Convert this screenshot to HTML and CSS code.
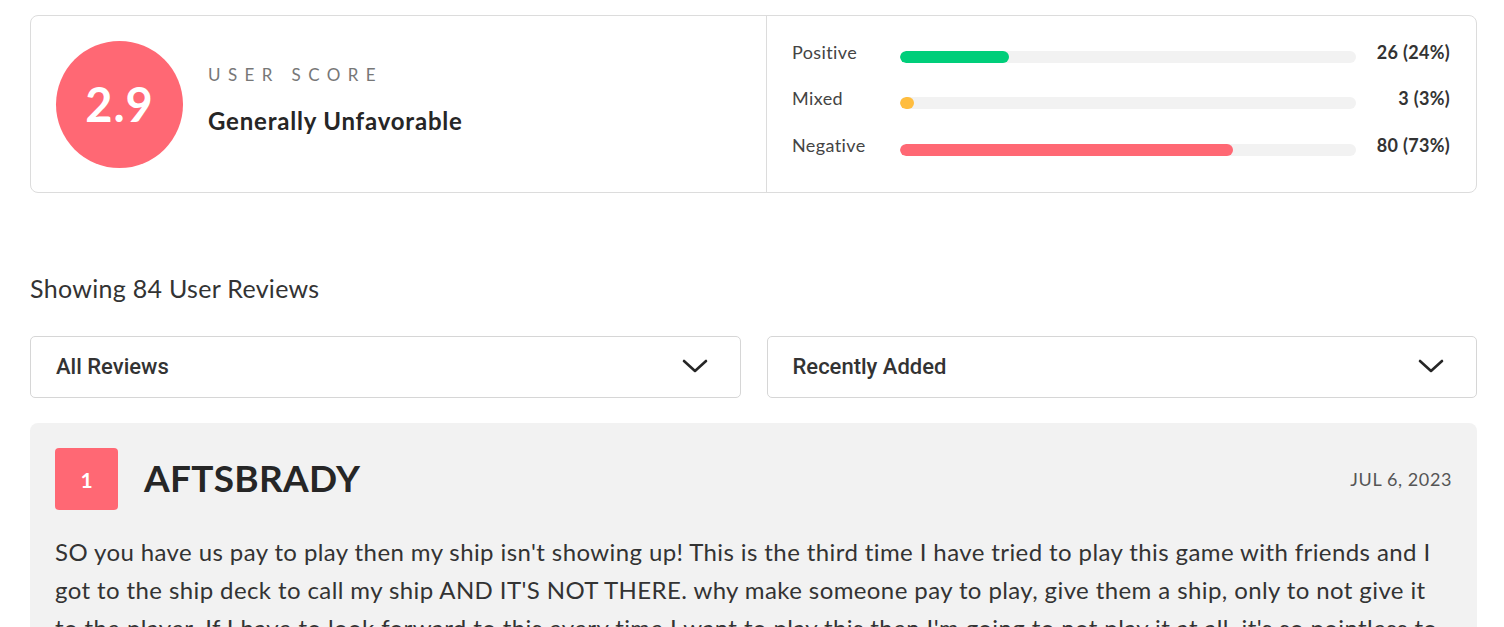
FILE: index.html
```html
<!DOCTYPE html>
<html>
<head>
<meta charset="utf-8">
<link rel="stylesheet" href="styles.css">
</head>
<body>
<div class="page">
  <section class="score-card">
    <div class="score-left">
      <div class="score-circle">2.9</div>
      <div class="score-info">
        <div class="score-label">USER SCORE</div>
        <div class="score-verdict">Generally Unfavorable</div>
      </div>
    </div>
    <div class="score-right">
      <div class="dist-row">
        <span class="dist-label">Positive</span>
        <div class="dist-track"><div class="dist-fill positive" style="width:24%"></div></div>
        <span class="dist-value">26 (24%)</span>
      </div>
      <div class="dist-row">
        <span class="dist-label">Mixed</span>
        <div class="dist-track"><div class="dist-fill mixed" style="width:3%"></div></div>
        <span class="dist-value">3 (3%)</span>
      </div>
      <div class="dist-row">
        <span class="dist-label">Negative</span>
        <div class="dist-track"><div class="dist-fill negative" style="width:73%"></div></div>
        <span class="dist-value">80 (73%)</span>
      </div>
    </div>
  </section>

  <h2 class="showing">Showing 84 User Reviews</h2>

  <div class="filters">
    <div class="select">
      <span>All Reviews</span>
      <svg class="chev" width="26" height="14" viewBox="0 0 26 14"><path d="M2 2 L13 12 L24 2" fill="none" stroke="#262626" stroke-width="2.6" stroke-linecap="round" stroke-linejoin="round"/></svg>
    </div>
    <div class="select">
      <span>Recently Added</span>
      <svg class="chev" width="26" height="14" viewBox="0 0 26 14"><path d="M2 2 L13 12 L24 2" fill="none" stroke="#262626" stroke-width="2.6" stroke-linecap="round" stroke-linejoin="round"/></svg>
    </div>
  </div>

  <article class="review">
    <header class="review-head">
      <div class="review-badge">1</div>
      <div class="review-author">AFTSBRADY</div>
      <div class="review-date">JUL 6, 2023</div>
    </header>
    <p class="review-body">SO you have us pay to play then my ship isn't showing up! This is the third time I have tried to play this game with friends and I got to the ship deck to call my ship AND IT'S NOT THERE. why make someone pay to play, give them a ship, only to not give it to the player. If I have to look forward to this every time I want to play this then I'm going to not play it at all. it's so pointless to</p>
  </article>
</div>
</body>
</html>
```

FILE: styles.css
```css
* { box-sizing: border-box; }
html, body { margin: 0; padding: 0; background: #fff; }
body { font-family: Lato, "Open Sans", sans-serif; color: #262626; overflow: hidden; height: 627px; }
.page { padding: 15px 27px 0 30px; }

.score-card {
  display: flex;
  border: 1px solid #dcdcdc;
  border-radius: 8px;
  height: 178px;
}
.score-left {
  width: 736px;
  border-right: 1px solid #dcdcdc;
  display: flex;
  align-items: center;
  padding-left: 25px;
}
.score-circle {
  width: 127px; height: 127px;
  border-radius: 50%;
  background: #ff6874;
  color: #fff;
  font-weight: 700;
  font-size: 47px;
  letter-spacing: 1px;
  display: flex; align-items: center; justify-content: center;
}
.score-info { margin-left: 25px; padding-bottom: 8px; }
.score-label {
  font-size: 17px;
  letter-spacing: 7.4px;
  color: #777;
  margin-bottom: 21px;
  margin-top: -2px;
}
.score-verdict { font-size: 24px; font-weight: 700; color: #262626; letter-spacing: 0.8px; }

.score-right {
  flex: 1;
  display: flex; flex-direction: column;
  padding: 24px 26px 0 25px;
  gap: 23.5px;
}
.dist-row { display: flex; align-items: center; height: 23px; }
.dist-label { width: 108px; font-size: 18px; color: #444; letter-spacing: 0.4px; }
.dist-track {
  flex: 0 0 456px;
  height: 12px;
  background: #f2f2f2;
  border-radius: 6px;
  margin-top: 10px;
  overflow: hidden;
}
.dist-fill { height: 100%; border-radius: 6px; }
.dist-fill.positive { background: #00ce7a; }
.dist-fill.mixed { background: #ffbd3f; min-width: 13px; }
.dist-fill.negative { background: #ff6874; }
.dist-value { margin-left: auto; font-size: 18px; font-weight: 700; color: #333; letter-spacing: 0.3px; }

.showing {
  margin: 80px 0 0 0;
  font-size: 25px;
  font-weight: 400;
  color: #333;
  line-height: 30px;
  letter-spacing: 0.3px;
}

.filters {
  display: grid;
  grid-template-columns: 1fr 1fr;
  gap: 26px;
  margin-top: 33px;
}
.select {
  height: 62px;
  border: 1px solid #d6d6d6;
  border-radius: 5px;
  display: flex; align-items: center; justify-content: space-between;
  padding: 0 32px 2px 25px;
  font-family: Roboto, sans-serif;
  font-weight: 500;
  font-size: 22px;
  color: #333;
}
.chev { display: block; }

.review {
  margin-top: 25px;
  background: #f2f2f2;
  border-radius: 8px;
  padding: 25px 25px 20px 25px;
  height: 300px;
}
.review-head { display: flex; align-items: center; }
.review-badge {
  width: 63px; height: 62px;
  background: #ff6874;
  border-radius: 4px;
  color: #fff;
  font-weight: 700;
  font-size: 21px;
  display: flex; align-items: center; justify-content: center;
}
.review-author { margin-left: 26px; font-size: 37px; font-weight: 700; color: #262626; letter-spacing: 0.3px; padding-bottom: 3px; }
.review-date { margin-left: auto; font-size: 18px; color: #555; letter-spacing: 0.6px; }
.review-body {
  margin: 23px 0 0 0;
  font-size: 24px;
  line-height: 38px;
  color: #333;
  letter-spacing: 0.4px;
}
```
